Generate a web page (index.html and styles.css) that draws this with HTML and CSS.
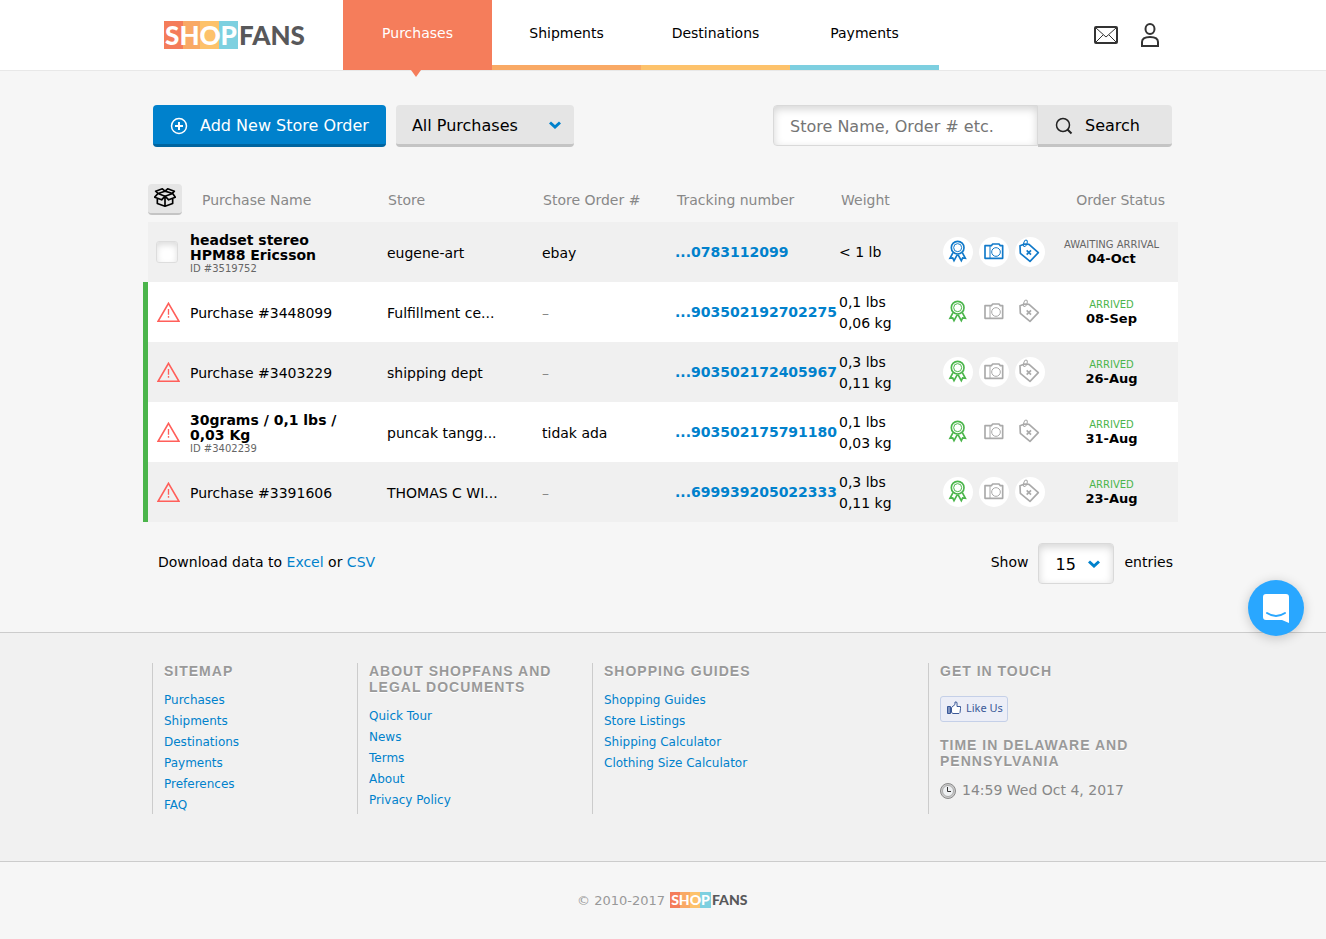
FILE: index.html
```html
<!DOCTYPE html>
<html lang="en">
<head>
<meta charset="utf-8">
<meta name="viewport" content="width=device-width, initial-scale=1">
<title>Shopfans – Purchases</title>
<link rel="stylesheet" href="styles.css">
</head>
<body>
<svg class="sprite" aria-hidden="true">
  <symbol id="i-award" viewBox="0 0 90 90"><g fill="none" stroke="currentColor" stroke-width="5"><circle cx="44" cy="32" r="19"/><circle cx="44" cy="32" r="12" stroke-width="3"/><path d="M30 47 21 64l8-1 4 8 10-18M58 47l9 17-8-1-4 8-10-18"/></g></symbol>
  <symbol id="i-camera" viewBox="0 0 90 90"><g fill="none" stroke="currentColor" stroke-width="5" stroke-linejoin="round"><path d="M18 26h19l4-5h19l4 5h7v38H18z"/><path d="M33 26v38" stroke-width="3"/><circle cx="51" cy="45" r="13" stroke-width="3"/></g></symbol>
  <symbol id="i-tag" viewBox="0 0 90 90"><g fill="none" stroke="currentColor" stroke-width="5" stroke-linejoin="round"><path d="M15 26 29 21l13 1 28 25-25 26-29-24z"/><ellipse cx="31" cy="19" rx="5" ry="10" transform="rotate(20 31 19)" stroke-width="3"/><path d="m35 40 13 13M48 40 35 53"/></g></symbol>
  <symbol id="i-warn" viewBox="0 0 69 60"><g fill="none" stroke="currentColor"><path d="M34.500 4 66 58H3z" stroke-width="5"/><path d="M34.500 21v17M34.500 42v5" stroke-width="4"/></g></symbol>
  <symbol id="i-chevron" viewBox="0 0 12 8"><path d="m1 1.500 5 4.500 5-4.500" fill="none" stroke="currentColor" stroke-width="3"/></symbol>
</svg>

<header class="header">
  <div class="wrap header-row">
    <a class="logo" href="#" aria-label="Shopfans"><span class="shop">SHOP</span><span class="fans">FANS</span></a>
    <nav class="tabs">
      <a class="tab active" href="#">Purchases</a>
      <a class="tab orange" href="#">Shipments</a>
      <a class="tab yellow" href="#">Destinations</a>
      <a class="tab blue" href="#">Payments</a>
    </nav>
    <div class="user-links">
      <a href="#" aria-label="Messages"><svg width="24" height="18" viewBox="0 0 24 18" fill="none" stroke="#333"><rect x="1" y="1" width="22" height="16" rx="1" stroke-width="2"/><path d="m2 2 10 9L22 2M2 16l7-7M22 16l-7-7"/></svg></a>
      <a href="#" aria-label="Account"><svg width="18" height="24" viewBox="0 0 18 24" fill="none" stroke="#333" stroke-width="2"><ellipse cx="9" cy="6" rx="4.500" ry="5"/><path d="M1 23v-4c0-3 3-5 8-5s8 2 8 5v4z"/></svg></a>
    </div>
  </div>
</header>

<main class="wrap main">
  <div class="toolbar">
    <button class="btn primary" type="button"><svg width="18" height="18" viewBox="0 0 18 18" fill="none" stroke="#fff"><circle cx="9" cy="9" r="7.500" stroke-width="1.500"/><path d="M5 9h8M9 5v8" stroke-width="2"/></svg>Add New Store Order</button>
    <div class="select filter"><select aria-label="Filter purchases"><option>All Purchases</option></select><svg class="chev" width="12" height="8"><use href="#i-chevron"/></svg></div>
    <form class="search">
      <input type="text" placeholder="Store Name, Order # etc." aria-label="Search purchases">
      <button class="btn grey" type="button"><svg width="18" height="18" viewBox="0 0 18 18" fill="none" stroke="#222"><circle cx="8" cy="8" r="6.500" stroke-width="1.500"/><path d="m12.500 12.500 4 4" stroke-width="2"/></svg>Search</button>
    </form>
  </div>

  <table class="purchases">
    <colgroup><col class="c-mark"><col class="c-name"><col class="c-store"><col class="c-order"><col class="c-track"><col class="c-weight"><col class="c-icons"><col class="c-status"></colgroup>
    <thead>
      <tr>
        <th class="mark"><button class="pack" type="button" aria-label="Pack selected"><svg width="22" height="19" viewBox="0 0 66 56" fill="none" stroke="#000" stroke-width="5" stroke-linejoin="round"><path d="m12 16-7-7 20-7 8 7 8-7 20 7-6 7M12 16l21-7 23 7-23 8zM12 16 2 27l21 8 10-11 11 11 20-8-8-11M10 31v15l23 8 23-8V31M33 24v30"/></svg></button></th>
        <th class="h-name">Purchase Name</th><th class="h-one">Store</th><th class="h-one">Store Order #</th><th class="h-two">Tracking number</th><th class="h-two">Weight</th><th></th><th class="h-status">Order Status</th>
      </tr>
    </thead>
    <tbody>
      <tr>
        <td class="mark"><input class="check" type="checkbox" aria-label="Select headset stereo HPM88 Ericsson"></td>
        <td class="name"><b>headset stereo HPM88 Ericsson</b><small>ID #3519752</small></td>
        <td class="text">eugene-art</td><td class="text">ebay</td><td class="track"><a href="#">...0783112099</a></td><td class="weight">&lt; 1 lb</td>
        <td class="icons"><div class="acts new"><button type="button" aria-label="Quality check"><svg><use href="#i-award"/></svg></button><button type="button" aria-label="Photos"><svg><use href="#i-camera"/></svg></button><button type="button" aria-label="Remove tags"><svg><use href="#i-tag"/></svg></button></div></td>
        <td class="status"><span>AWAITING ARRIVAL</span><b>04-Oct</b></td>
      </tr>
      <tr class="arrived">
        <td class="mark"><svg class="warn" role="img" aria-label="Warning"><use href="#i-warn"/></svg></td>
        <td class="name">Purchase #3448099</td>
        <td class="text">Fulfillment ce...</td><td class="text none">–</td><td class="track"><a href="#">...903502192702275</a></td><td class="weight">0,1 lbs<br>0,06 kg</td>
        <td class="icons"><div class="acts"><button type="button" aria-label="Quality check"><svg><use href="#i-award"/></svg></button><button type="button" aria-label="Photos"><svg><use href="#i-camera"/></svg></button><button type="button" aria-label="Remove tags"><svg><use href="#i-tag"/></svg></button></div></td>
        <td class="status"><span>ARRIVED</span><b>08-Sep</b></td>
      </tr>
      <tr class="arrived">
        <td class="mark"><svg class="warn" role="img" aria-label="Warning"><use href="#i-warn"/></svg></td>
        <td class="name">Purchase #3403229</td>
        <td class="text">shipping dept</td><td class="text none">–</td><td class="track"><a href="#">...903502172405967</a></td><td class="weight">0,3 lbs<br>0,11 kg</td>
        <td class="icons"><div class="acts"><button type="button" aria-label="Quality check"><svg><use href="#i-award"/></svg></button><button type="button" aria-label="Photos"><svg><use href="#i-camera"/></svg></button><button type="button" aria-label="Remove tags"><svg><use href="#i-tag"/></svg></button></div></td>
        <td class="status"><span>ARRIVED</span><b>26-Aug</b></td>
      </tr>
      <tr class="arrived">
        <td class="mark"><svg class="warn" role="img" aria-label="Warning"><use href="#i-warn"/></svg></td>
        <td class="name"><b>30grams / 0,1 lbs / 0,03 Kg</b><small>ID #3402239</small></td>
        <td class="text">puncak tangg...</td><td class="text">tidak ada</td><td class="track"><a href="#">...903502175791180</a></td><td class="weight">0,1 lbs<br>0,03 kg</td>
        <td class="icons"><div class="acts"><button type="button" aria-label="Quality check"><svg><use href="#i-award"/></svg></button><button type="button" aria-label="Photos"><svg><use href="#i-camera"/></svg></button><button type="button" aria-label="Remove tags"><svg><use href="#i-tag"/></svg></button></div></td>
        <td class="status"><span>ARRIVED</span><b>31-Aug</b></td>
      </tr>
      <tr class="arrived">
        <td class="mark"><svg class="warn" role="img" aria-label="Warning"><use href="#i-warn"/></svg></td>
        <td class="name">Purchase #3391606</td>
        <td class="text">THOMAS C WI...</td><td class="text none">–</td><td class="track"><a href="#">...699939205022333</a></td><td class="weight">0,3 lbs<br>0,11 kg</td>
        <td class="icons"><div class="acts"><button type="button" aria-label="Quality check"><svg><use href="#i-award"/></svg></button><button type="button" aria-label="Photos"><svg><use href="#i-camera"/></svg></button><button type="button" aria-label="Remove tags"><svg><use href="#i-tag"/></svg></button></div></td>
        <td class="status"><span>ARRIVED</span><b>23-Aug</b></td>
      </tr>
    </tbody>
  </table>

  <div class="table-foot">
    <p>Download data to <a href="#">Excel</a> or <a href="#">CSV</a></p>
    <div class="show"><label for="count">Show</label><div class="select count"><select id="count"><option>15</option></select><svg class="chev" width="12" height="8"><use href="#i-chevron"/></svg></div><span>entries</span></div>
  </div>
</main>

<footer>
  <div class="links-band">
    <div class="wrap footer-grid">
      <section><h2>Sitemap</h2><ul><li><a href="#">Purchases</a></li><li><a href="#">Shipments</a></li><li><a href="#">Destinations</a></li><li><a href="#">Payments</a></li><li><a href="#">Preferences</a></li><li><a href="#">FAQ</a></li></ul></section>
      <section><h2>About Shopfans and<br>legal documents</h2><ul><li><a href="#">Quick Tour</a></li><li><a href="#">News</a></li><li><a href="#">Terms</a></li><li><a href="#">About</a></li><li><a href="#">Privacy Policy</a></li></ul></section>
      <section><h2>Shopping guides</h2><ul><li><a href="#">Shopping Guides</a></li><li><a href="#">Store Listings</a></li><li><a href="#">Shipping Calculator</a></li><li><a href="#">Clothing Size Calculator</a></li></ul></section>
      <section><h2>Get in touch</h2>
        <a class="like" href="#"><svg width="14" height="14" viewBox="0 0 14 14"><path d="M4.500 6.500 8 3.500V1h1.500l.5 1v3.500h3.500v2l-.5 4-1 1H6l-1.500-1z" fill="#fff" stroke="#3b5998"/><path d="M.5 5.500h3v7h-3z" fill="#8094c0" stroke="#3b5998"/></svg>Like Us</a>
        <h2>Time in Delaware and<br>Pennsylvania</h2>
        <p class="time"><svg width="16" height="16" viewBox="0 0 16 16"><circle cx="8" cy="8" r="7.500" fill="#ccc" stroke="#8a8a8a"/><circle cx="8" cy="8" r="5.500" fill="#eef0f2" stroke="#aaa"/><path d="M7.500 4v4.500H11" fill="none" stroke="#333"/></svg>14:59 Wed Oct 4, 2017</p>
      </section>
    </div>
  </div>
  <div class="copyright"><span>© 2010-2017</span><a class="logo small" href="#" aria-label="Shopfans"><span class="shop">SHOP</span><span class="fans">FANS</span></a></div>
</footer>

<button class="chat" type="button" aria-label="Open chat"><svg width="28" height="30" viewBox="0 0 28 30"><path d="M4 1h20q3 0 3 3v26l-7-3H4q-3 0-3-3V4q0-3 3-3z" fill="#fff"/><path d="M5 20q9 6 18 0" fill="none" stroke="#29a7ff" stroke-width="2" stroke-linecap="round"/></svg></button>
</body>
</html>
```

FILE: styles.css
```css
* { box-sizing: border-box; }
body {
  margin: 0;
  background: #f6f6f6;
  color: #000;
  font: 14px/21px Verdana, "DejaVu Sans", sans-serif;
}
a { color: #0081cc; text-decoration: none; }
p, ul, h2 { margin: 0; padding: 0; }
ul { list-style: none; }
button, input, select { font: inherit; color: inherit; margin: 0; }
button { cursor: pointer; border: 0; padding: 0; }
svg { display: block; }
.sprite { display: none; }
.wrap { max-width: 1020px; margin: 0 auto; }

/* Header */
.header { background: #fff; border-bottom: 1px solid #e8e8e8; }
.header-row { display: flex; align-items: center; height: 70px; padding: 0 14px 0 11px; }
.logo { display: flex; align-items: center; width: 141px; height: 28px; color: #58585a; font: 900 26px/28px Lato, sans-serif; }
.shop {
  display: flex;
  justify-content: center;
  width: 74px;
  height: 100%;
  color: #fff;
  background: linear-gradient(90deg, #f47c5a 25%, #f9a965 25% 49%, #fdc26b 49% 74%, #7dd0e0 74%);
}
.fans { margin-left: 1px; }
.tabs { display: flex; align-self: stretch; margin-left: 38px; }
.tab {
  position: relative;
  display: flex;
  align-items: center;
  justify-content: center;
  width: 149px;
  padding-top: 2px;
  color: #000;
  border-bottom: 5px solid;
}
.tab.active { background: #f57d5b; border-color: #f57d5b; color: #fff; }
.tab.active::after {
  content: "";
  position: absolute;
  top: 70px;
  left: 68px;
  border: 5px solid transparent;
  border-top: 7px solid #f57d5b;
  border-bottom: 0;
}
.tab.orange { border-color: #f9a965; }
.tab.yellow { border-color: #fdc26b; }
.tab.blue { border-color: #7dcfe0; }
.user-links { display: flex; align-items: center; gap: 23px; margin-left: auto; }

/* Toolbar */
.main { padding-top: 34px; }
.toolbar { display: flex; gap: 10px; padding-right: 1px; font-size: 16px; }
.btn { display: flex; align-items: center; height: 42px; border-radius: 4px; padding: 2px 17px 0; }
.primary { background: #0081cc; color: #fff; border-bottom: 3px solid #0065a0; gap: 12px; }
.select { position: relative; }
.select select { appearance: none; width: 100%; height: 100%; border: 0; background: none; padding: 2px 16px 0; }
.chev { position: absolute; top: 16px; right: 13px; color: #0081cc; pointer-events: none; }
.filter { width: 178px; height: 42px; background: #e5e5e5; border-bottom: 3px solid #c4c4c4; border-radius: 4px; }
.search { display: flex; align-items: flex-start; margin-left: auto; }
.search input {
  width: 265px;
  height: 41px;
  padding: 2px 16px 0;
  border: 1px solid #d9d9d9;
  border-radius: 4px 0 0 4px;
  background: #fff;
  box-shadow: inset 0 3px 8px #d4d4d4;
}
.search input::placeholder { color: #757575; opacity: 1; }
.grey { width: 134px; background: #e5e5e5; border-bottom: 3px solid #c4c4c4; border-radius: 0 4px 4px 0; gap: 12px; }

/* Purchases table */
.purchases { width: calc(100% + 15px); margin: 31px -5px 0 -10px; table-layout: fixed; border-collapse: separate; border-spacing: 0; }
.c-mark { width: 47px; }
.c-store { width: 155px; }
.c-order { width: 133px; }
.c-track { width: 164px; }
.c-weight { width: 102px; }
.c-icons { width: 106px; }
.c-status { width: 131px; }
.purchases th, .purchases td { padding: 0; text-align: left; }
.purchases th { height: 44px; color: #888; font-weight: normal; }
.purchases td { height: 60px; background: #f0f0f0; background-clip: padding-box; }
.purchases tbody tr:nth-child(even) td { background-color: #fff; }
.purchases .mark { border-left: 5px solid transparent; padding-bottom: 1px; }
.purchases .arrived .mark { border-left-color: #4bb54b; }
.purchases .name, .purchases .text { padding-top: 2px; }
.purchases .weight { padding-top: 1px; }
.purchases .h-name { padding-left: 12px; }
.purchases .h-one { padding-left: 1px; }
.purchases .h-two { padding-left: 2px; }
.purchases .h-status { text-align: right; padding-right: 13px; }
.pack { display: flex; justify-content: center; padding-top: 4px; width: 34px; height: 31px; background: #e5e5e5; border-bottom: 2px solid #c4c4c4; border-radius: 4px; }
.check {
  display: block;
  appearance: none;
  width: 22px;
  height: 22px;
  margin-left: 8px;
  border: 1px solid #ddd;
  border-radius: 3px;
  background: #fff;
  box-shadow: inset 0 3px 6px #ddd;
}
.warn { width: 23px; height: 20px; margin-left: 9px; color: #ff5f5a; }
.name b { display: block; max-width: 170px; line-height: 15px; }
.name small { display: block; font-size: 10px; line-height: 11px; color: #666; }
.none { color: #888; }
.track { white-space: nowrap; font-weight: bold; }
.purchases .icons { padding-bottom: 1px; }
.acts { display: flex; gap: 6px; padding-left: 2px; color: #aaa; }
.acts button { width: 30px; height: 30px; border-radius: 50%; background: #fff; color: inherit; }
.acts svg { width: 30px; height: 30px; }
.acts button:first-child { color: #4bb54b; }
.acts.new button { color: #1079c9; }
.purchases .status { text-align: center; line-height: 14px; padding: 0 2px 1px 0; }
.status span { display: block; font-size: 10px; color: #666; }
.status b { display: block; font-size: 13px; }
.arrived .status span { color: #4bb54b; }

.table-foot { display: flex; justify-content: space-between; margin-top: 21px; padding-left: 5px; line-height: 38px; }
.show { display: flex; gap: 10px; }
.count { width: 76px; height: 41px; font-size: 16px; border: 1px solid #d9d9d9; border-radius: 4px; background: #fff; box-shadow: inset 0 3px 8px #d4d4d4; }

/* Footer */
.links-band { margin-top: 48px; padding: 30px 0 47px; background: #f1f1f1; border: solid #ccc; border-width: 1px 0; }
.footer-grid { display: grid; grid-template-columns: 205px 235px 336px 1fr; position: relative; left: -1px; }
.footer-grid section { min-height: 151px; border-left: 1px solid #ccc; padding-left: 11px; font-size: 12px; }
.footer-grid h2 { font: bold 14px/16px Arial, "Liberation Sans", sans-serif; letter-spacing: 1px; text-transform: uppercase; color: #999; text-shadow: 0 1px #fff; margin-bottom: 10px; }
.footer-grid ul { padding-top: 1px; margin-bottom: -2px; }
.like { display: flex; align-items: center; gap: 5px; width: 68px; height: 26px; margin: 17px 0 15px; padding: 0 0 2px 6px; border: 1px solid #c5d0e8; border-radius: 3px; background: #eceef7; color: #3b5998; font: 11px/16px Tahoma, "Noto Sans", sans-serif; white-space: nowrap; }
.time { display: flex; align-items: center; gap: 6px; padding-top: 1px; font-size: 14px; color: #888; }
.copyright { display: flex; align-items: center; justify-content: center; gap: 5px; height: 76px; font-size: 13px; color: #999; }
.small { width: 79px; height: 16px; font-size: 14px; line-height: 16px; }
.small .shop { width: 41px; }

.chat { position: fixed; right: 22px; bottom: 303px; display: flex; align-items: center; justify-content: center; width: 56px; height: 56px; border-radius: 50%; background: #29a7ff; box-shadow: 0 2px 12px rgba(0, 0, 0, .2); }
```
